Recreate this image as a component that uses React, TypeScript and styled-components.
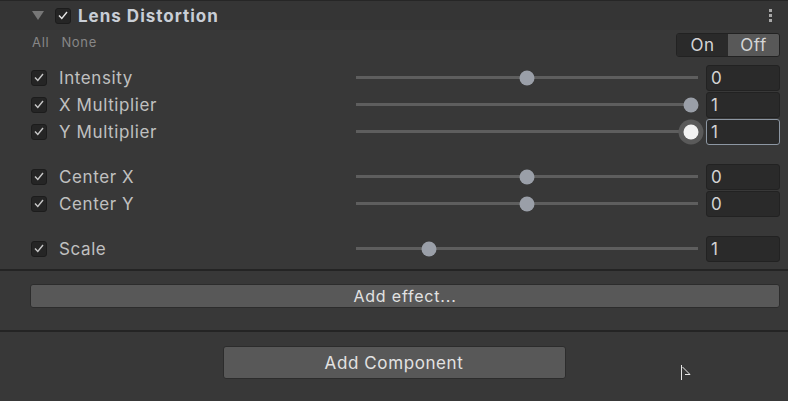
import React from 'react';
import styled, { createGlobalStyle } from 'styled-components';

const GlobalStyle = createGlobalStyle`
  html, body {
    margin: 0;
    padding: 0;
    background: #383838;
  }
  * {
    box-sizing: border-box;
  }
`;

const Panel = styled.div`
  position: relative;
  width: 788px;
  height: 401px;
  display: flex;
  flex-direction: column;
  background: #383838;
  font-family: Inter, 'Noto Sans', sans-serif;
  color: #c4c4c4;
  overflow: hidden;
`;

const Header = styled.div`
  height: 30px;
  display: flex;
  align-items: center;
  padding-left: 32px;
  padding-right: 16px;
  background: #353535;
  border-top: 1px solid #262626;
`;

const FoldArrow = styled.div`
  width: 0;
  height: 0;
  border-left: 6px solid transparent;
  border-right: 6px solid transparent;
  border-top: 9px solid #777777;
  margin-right: 11px;
`;

const Check = styled.div<{ $size?: number }>`
  width: ${p => p.$size ?? 16}px;
  height: ${p => p.$size ?? 16}px;
  flex: none;
  display: flex;
  align-items: center;
  justify-content: center;
  background: #252525;
  border: 1px solid #1c1c1c;
  border-radius: 3px;
`;

const Title = styled.div`
  margin-left: 7px;
  font-size: 17px;
  font-weight: 700;
  letter-spacing: 1px;
  color: #c9ced6;
  flex: 1;
`;

const Kebab = styled.div`
  display: flex;
  flex-direction: column;
  gap: 2px;
  span {
    width: 3px;
    height: 3px;
    background: #a8a8a8;
  }
`;

const OptionsRow = styled.div`
  height: 24px;
  margin-top: 3px;
  display: flex;
  justify-content: space-between;
  padding: 0 8px 0 32px;
`;

const Links = styled.div`
  display: flex;
  gap: 12px;
  font-size: 13px;
  letter-spacing: 0.7px;
  color: #878787;
  line-height: 18px;
`;

const Toggle = styled.div`
  display: flex;
  width: 104px;
  height: 24px;
  border-radius: 3px;
  overflow: hidden;
  border: 1px solid #222222;
`;

const ToggleOption = styled.div<{ $active?: boolean }>`
  flex: 1;
  display: flex;
  align-items: center;
  justify-content: center;
  font-size: 17px;
  letter-spacing: 0.6px;
  color: #d6d6d6;
  background: ${p => (p.$active ? '#585858' : '#2a2a2a')};
`;

const Rows = styled.div`
  padding-top: 7px;
  display: flex;
  flex-direction: column;
  gap: 18px;
`;

const Group = styled.div`
  display: flex;
  flex-direction: column;
`;

const Row = styled.div`
  height: 27px;
  display: flex;
  align-items: center;
  padding-left: 31px;
`;

const Label = styled.div`
  width: 297px;
  margin-left: 12px;
  font-size: 17px;
  letter-spacing: 0.6px;
  color: #c0c0c0;
`;

const Track = styled.div`
  position: relative;
  width: 342px;
  height: 3px;
  background: #5e5e5e;
  margin-right: 8px;
`;

const Thumb = styled.div<{ $focused?: boolean }>`
  position: absolute;
  top: 50%;
  width: 15px;
  height: 15px;
  border-radius: 50%;
  transform: translate(-50%, -50%);
  background: ${p => (p.$focused ? '#f2f2f2' : '#9a9fa8')};
  box-shadow: ${p => (p.$focused ? '0 0 0 5px #5a5a5a' : 'none')};
`;

const Field = styled.div<{ $focused?: boolean }>`
  width: 74px;
  height: 26px;
  display: flex;
  align-items: center;
  padding-left: 4px;
  font-size: 17px;
  color: #d4d4d4;
  background: #2a2a2a;
  border: 1px solid ${p => (p.$focused ? '#8d97a3' : '#222222')};
  border-radius: 3px;
`;

const Separator = styled.div<{ $top: number }>`
  margin-top: ${p => p.$top}px;
  height: 2px;
  background: #242424;
`;

const WideButton = styled.div`
  margin: 13px 8px 0 30px;
  height: 24px;
  display: flex;
  align-items: center;
  justify-content: center;
  background: #585858;
  border: 1px solid #2c2c2c;
  border-radius: 3px;
  font-size: 16px;
  letter-spacing: 0.8px;
  color: #e2e2e2;
`;

const ComponentButton = styled.div`
  align-self: center;
  margin-top: 14px;
  width: 343px;
  height: 33px;
  display: flex;
  align-items: center;
  justify-content: center;
  background: #585858;
  border: 1px solid #2c2c2c;
  border-radius: 3px;
  font-size: 17px;
  letter-spacing: 0.6px;
  color: #e2e2e2;
`;

const Cursor = styled.svg`
  position: absolute;
  left: 681px;
  top: 365px;
`;

const CheckMark = ({ color = '#c8c8c8' }: { color?: string }) => (
  <svg width="10" height="9" viewBox="0 0 10 9">
    <path d="M1 4.5 L3.8 7.5 L9 1" fill="none" stroke={color} strokeWidth="1.4" />
  </svg>
);

type Param = { label: string; frac: number; value: string; focused?: boolean };

const groups: Param[][] = [
  [
    { label: 'Intensity', frac: 0.5, value: '0' },
    { label: 'X Multiplier', frac: 1, value: '1' },
    { label: 'Y Multiplier', frac: 1, value: '1', focused: true },
  ],
  [
    { label: 'Center X', frac: 0.5, value: '0' },
    { label: 'Center Y', frac: 0.5, value: '0' },
  ],
  [{ label: 'Scale', frac: 0.2, value: '1' }],
];

const ParamRow = ({ label, frac, value, focused }: Param) => (
  <Row>
    <Check>
      <CheckMark />
    </Check>
    <Label>{label}</Label>
    <Track>
      <Thumb $focused={focused} style={{ left: 7.5 + frac * 327 }} />
    </Track>
    <Field $focused={focused}>{value}</Field>
  </Row>
);

export default function App() {
  return (
    <Panel>
      <GlobalStyle />
      <Header>
        <FoldArrow />
        <Check $size={16}>
          <CheckMark color="#e6e6e6" />
        </Check>
        <Title>Lens Distortion</Title>
        <Kebab>
          <span />
          <span />
          <span />
        </Kebab>
      </Header>
      <OptionsRow>
        <Links>
          <span>All</span>
          <span>None</span>
        </Links>
        <Toggle>
          <ToggleOption>On</ToggleOption>
          <ToggleOption $active>Off</ToggleOption>
        </Toggle>
      </OptionsRow>
      <Rows>
        {groups.map((g, i) => (
          <Group key={i}>
            {g.map(p => (
              <ParamRow key={p.label} {...p} />
            ))}
          </Group>
        ))}
      </Rows>
      <Separator $top={7} />
      <WideButton>Add effect...</WideButton>
      <Separator $top={22} />
      <ComponentButton>Add Component</ComponentButton>
      <Cursor width="12" height="18" viewBox="0 0 12 18">
        <path d="M0.5 0 V15 M1.5 2 L9 9.5 H4" fill="none" stroke="#e8e8e8" strokeWidth="1" />
      </Cursor>
    </Panel>
  );
}
